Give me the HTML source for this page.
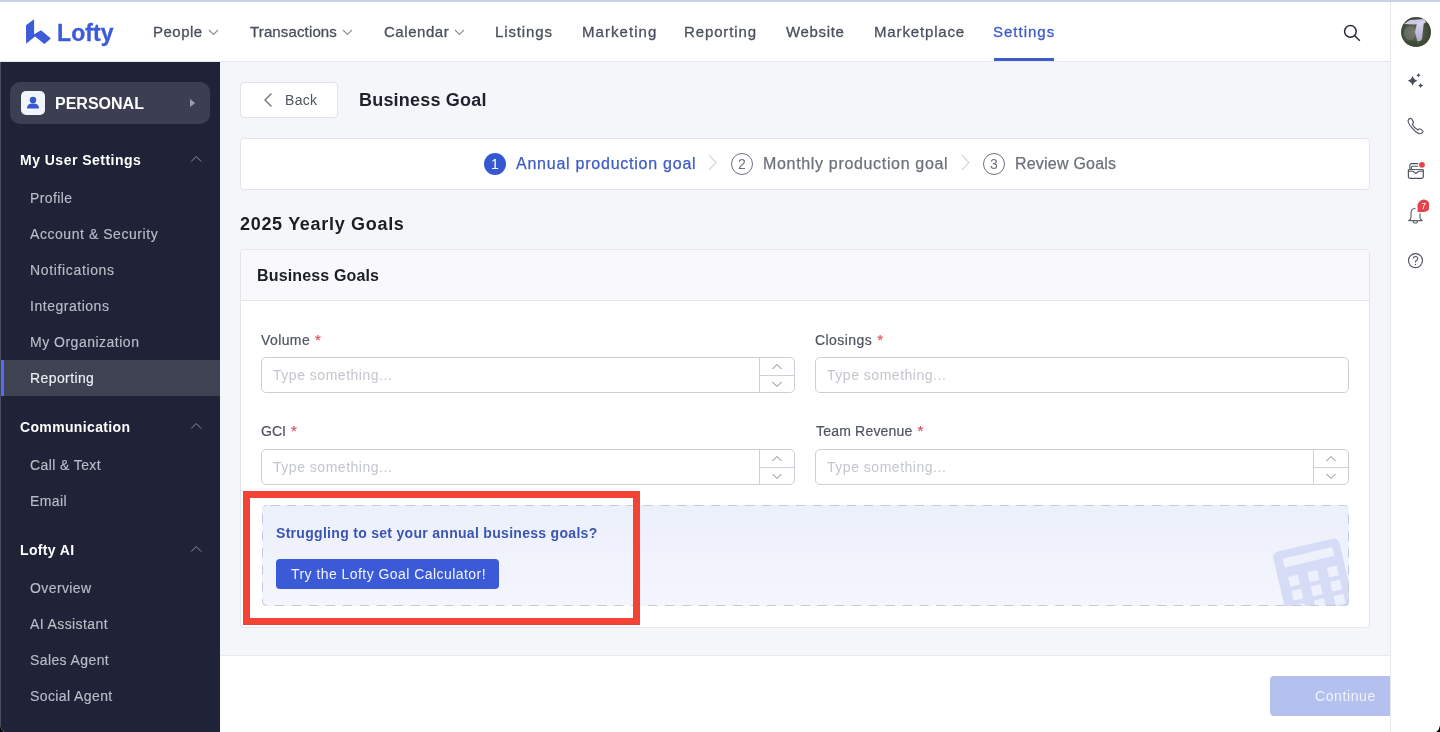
<!DOCTYPE html>
<html><head><meta charset="utf-8">
<style>
*{box-sizing:border-box;margin:0;padding:0}
html,body{width:1440px;height:732px;overflow:hidden;background:#000}
body{font-family:"Liberation Sans",sans-serif;position:relative}
.abs{position:absolute}
#app{position:absolute;left:0;top:0;width:1440px;height:732px;background:#fff;overflow:hidden;will-change:transform;border-radius:0 0 5px 5px / 0 0 9px 9px}
#topline{position:absolute;left:0;top:0;width:1440px;height:2px;background:#c9cfe3}
#nav{position:absolute;left:0;top:2px;width:1390px;height:60px;background:#fff;border-bottom:1px solid #e6e8ee}
.nv{position:absolute;top:21px;font-size:15px;color:#4b505c;white-space:nowrap;line-height:18px;-webkit-text-stroke:0.3px currentColor}
#side{position:absolute;left:0;top:62px;width:220px;height:670px;background:#202337}
#side .edge{position:absolute;left:0;top:0;width:1px;height:670px;background:#4a4d5e}
.sh{position:absolute;left:20px;font-size:14px;font-weight:bold;color:#fff;letter-spacing:0.35px;line-height:16px;white-space:nowrap}
.si{position:absolute;left:30px;font-size:14px;color:#b9bcc7;letter-spacing:0.4px;line-height:16px;white-space:nowrap;-webkit-text-stroke:0.15px currentColor}
.up{position:absolute;left:190px}
#main{position:absolute;left:220px;top:62px;width:1170px;height:594px;background:#f5f6fa;overflow:hidden}
#foot{position:absolute;left:220px;top:655px;width:1170px;height:77px;background:#fff;border-top:1px solid #e8eaf0;overflow:hidden}
#rail{position:absolute;left:1390px;top:2px;width:50px;height:730px;background:#fff;border-left:1px solid #e6e8ee}
.box{position:absolute;background:#fff;border:1px solid #e3e5ea;border-radius:4px}
.lbl{position:absolute;font-size:14px;color:#4f5460;line-height:16px;white-space:nowrap;-webkit-text-stroke:0.2px currentColor}
.lbl b{color:#db5060;font-weight:normal;margin-left:5px;font-size:15px;letter-spacing:0}
.inp{position:absolute;width:534px;height:36px;background:#fff;border:1px solid #cdd0d6;border-radius:5px}
.ph{position:absolute;left:11px;top:9px;font-size:14px;color:#c3c6ce;line-height:16px;letter-spacing:0.52px;white-space:nowrap}
.spin{position:absolute;right:0;top:0;width:35px;height:34px;border-left:1px solid #cdd0d6}
.spin i{position:absolute;left:0;top:17px;width:34px;height:1px;background:#cdd0d6}
</style></head>
<body>
<div id="app">
  <div id="topline"></div>
  <div id="nav">
    <svg class="abs" style="left:26px;top:17px" width="26" height="26" viewBox="26 19 26 26">
      <polygon points="26,25.3 34.1,19.2 34.1,34.2 41,30.2 50.9,38.6 44.4,44 35,36.6 26.1,43.8" fill="#3b5bd9"/>
    </svg>
    <div class="nv" style="left:57px;top:18px;font-size:23px;font-weight:bold;color:#3b5bd9;line-height:26px;letter-spacing:0.1px">Lofty</div>
    <div class="nv" style="left:153px;letter-spacing:0.5px">People</div>
    <svg class="abs" style="left:208px;top:27px" width="11" height="7" viewBox="0 0 11 7"><path d="M1 1 L5.5 5.5 L10 1" fill="none" stroke="#8c909a" stroke-width="1.2"/></svg>
    <div class="nv" style="left:250px;letter-spacing:0.14px">Transactions</div>
    <svg class="abs" style="left:342px;top:27px" width="11" height="7" viewBox="0 0 11 7"><path d="M1 1 L5.5 5.5 L10 1" fill="none" stroke="#8c909a" stroke-width="1.2"/></svg>
    <div class="nv" style="left:384px;letter-spacing:0.54px">Calendar</div>
    <svg class="abs" style="left:454px;top:27px" width="11" height="7" viewBox="0 0 11 7"><path d="M1 1 L5.5 5.5 L10 1" fill="none" stroke="#8c909a" stroke-width="1.2"/></svg>
    <div class="nv" style="left:495px;letter-spacing:0.86px">Listings</div>
    <div class="nv" style="left:582px;letter-spacing:1.06px">Marketing</div>
    <div class="nv" style="left:684px;letter-spacing:0.87px">Reporting</div>
    <div class="nv" style="left:786px;letter-spacing:0.67px">Website</div>
    <div class="nv" style="left:874px;letter-spacing:0.85px">Marketplace</div>
    <div class="nv" style="left:993px;color:#3d5bc9;letter-spacing:1px">Settings</div>
    <div class="abs" style="left:994px;top:56px;width:60px;height:3px;background:#3d5bc9"></div>
    <svg class="abs" style="left:1340px;top:21px" width="24" height="24" viewBox="1340 23 24 24">
      <circle cx="1350.4" cy="31.4" r="5.8" fill="none" stroke="#262a33" stroke-width="1.5"/>
      <line x1="1354.7" y1="35.7" x2="1359.8" y2="40.8" stroke="#262a33" stroke-width="1.5"/>
    </svg>
  </div>

  <div id="side">
    <div class="edge"></div>
    <div class="abs" style="left:10px;top:20px;width:200px;height:42px;background:#3c3f51;border-radius:10px"></div>
    <div class="abs" style="left:21px;top:29px;width:24px;height:24px;background:#f2f4fd;border-radius:5px"></div>
    <svg class="abs" style="left:21px;top:29px" width="24" height="24" viewBox="0 0 24 24">
      <circle cx="12" cy="9" r="3.2" fill="#3557cf"/>
      <path d="M6 17.5 C6 13.8 8.7 12.6 12 12.6 C15.3 12.6 18 13.8 18 17.5 Z" fill="#3557cf"/>
    </svg>
    <div class="abs" style="left:55px;top:33px;font-size:16px;font-weight:bold;color:#fff;line-height:18px">PERSONAL</div>
    <svg class="abs" style="left:189px;top:36px" width="8" height="12" viewBox="0 0 8 12"><path d="M1 1 L6.2 5 L1 9 Z" fill="#9a9dab"/></svg>

    <div class="sh" style="top:90px;letter-spacing:0.48px">My User Settings</div>
    <svg class="up" style="top:93px" width="13" height="8" viewBox="0 0 13 8"><path d="M1.2 6.5 L6.2 1.5 L11.2 6.5" fill="none" stroke="#8d90a0" stroke-width="1"/></svg>
    <div class="si" style="top:128px">Profile</div>
    <div class="si" style="top:164px;letter-spacing:0.55px">Account &amp; Security</div>
    <div class="si" style="top:200px;letter-spacing:0.65px">Notifications</div>
    <div class="si" style="top:236px;letter-spacing:0.52px">Integrations</div>
    <div class="si" style="top:272px;letter-spacing:0.5px">My Organization</div>
    <div class="abs" style="left:0;top:298px;width:220px;height:36px;background:#3f4253"></div>
    <div class="abs" style="left:1px;top:298px;width:3px;height:36px;background:#4f6ef0"></div>
    <div class="si" style="top:308px;color:#eceef3">Reporting</div>

    <div class="sh" style="top:357px">Communication</div>
    <svg class="up" style="top:360px" width="13" height="8" viewBox="0 0 13 8"><path d="M1.2 6.5 L6.2 1.5 L11.2 6.5" fill="none" stroke="#8d90a0" stroke-width="1"/></svg>
    <div class="si" style="top:395px">Call &amp; Text</div>
    <div class="si" style="top:431px">Email</div>

    <div class="sh" style="top:480px">Lofty AI</div>
    <svg class="up" style="top:483px" width="13" height="8" viewBox="0 0 13 8"><path d="M1.2 6.5 L6.2 1.5 L11.2 6.5" fill="none" stroke="#8d90a0" stroke-width="1"/></svg>
    <div class="si" style="top:518px">Overview</div>
    <div class="si" style="top:554px">AI Assistant</div>
    <div class="si" style="top:590px">Sales Agent</div>
    <div class="si" style="top:626px">Social Agent</div>
  </div>

  <div id="main">
    <!-- Back button -->
    <div class="box" style="left:20px;top:20px;width:98px;height:36px;border-color:#e0e2e8"></div>
    <svg class="abs" style="left:42px;top:30px" width="12" height="16" viewBox="0 0 12 16"><path d="M9.5 1.5 L3 8 L9.5 14.5" fill="none" stroke="#6a6e78" stroke-width="1.3"/></svg>
    <div class="abs" style="left:65px;top:30px;font-size:14px;color:#50545f;line-height:16px;letter-spacing:0.3px">Back</div>
    <div class="abs" style="left:139px;top:28px;font-size:18px;font-weight:bold;color:#1f222d;line-height:20px;letter-spacing:0.2px">Business Goal</div>

    <!-- Stepper -->
    <div class="box" style="left:20px;top:76px;width:1130px;height:52px"></div>
    <div class="abs" style="left:264px;top:91px;width:22px;height:22px;border-radius:50%;background:#3557cf;color:#fff;font-size:14px;line-height:22px;text-align:center">1</div>
    <div class="abs" style="left:296px;top:93px;font-size:16px;color:#3d5bc4;line-height:18px;letter-spacing:0.76px;white-space:nowrap;-webkit-text-stroke:0.25px currentColor">Annual production goal</div>
    <svg class="abs" style="left:488px;top:92px" width="10" height="17" viewBox="0 0 10 17"><path d="M1 1 L8 8.5 L1 16" fill="none" stroke="#d5d7dd" stroke-width="1.2"/></svg>
    <div class="abs" style="left:511px;top:91px;width:22px;height:22px;border-radius:50%;border:1px solid #6d717b;color:#6d717b;font-size:14px;line-height:20px;text-align:center">2</div>
    <div class="abs" style="left:543px;top:93px;font-size:16px;color:#6d717b;line-height:18px;letter-spacing:0.67px;white-space:nowrap;-webkit-text-stroke:0.25px currentColor">Monthly production goal</div>
    <svg class="abs" style="left:741px;top:92px" width="10" height="17" viewBox="0 0 10 17"><path d="M1 1 L8 8.5 L1 16" fill="none" stroke="#d5d7dd" stroke-width="1.2"/></svg>
    <div class="abs" style="left:763px;top:91px;width:22px;height:22px;border-radius:50%;border:1px solid #6d717b;color:#6d717b;font-size:14px;line-height:20px;text-align:center">3</div>
    <div class="abs" style="left:795px;top:93px;font-size:16px;color:#6d717b;line-height:18px;letter-spacing:0.21px;white-space:nowrap;-webkit-text-stroke:0.25px currentColor">Review Goals</div>

    <div class="abs" style="left:20px;top:152px;font-size:18px;font-weight:bold;color:#1c1e26;line-height:20px;letter-spacing:0.69px;white-space:nowrap">2025 Yearly Goals</div>

    <!-- Card -->
    <div class="box" style="left:20px;top:187px;width:1130px;height:379px;overflow:hidden">
      <div class="abs" style="left:0;top:0;width:1128px;height:51px;background:#f9f9fc;border-bottom:1px solid #e3e5ea"></div>
      <div class="abs" style="left:16px;top:17px;font-size:16px;font-weight:bold;color:#1c1e26;line-height:18px;letter-spacing:0.15px;white-space:nowrap">Business Goals</div>

      <div class="lbl" style="left:20px;top:82px;letter-spacing:0.4px">Volume<b>*</b></div>
      <div class="inp" style="left:20px;top:107px"><div class="ph">Type something...</div><div class="spin"><i></i>
        <svg class="abs" style="left:11px;top:5px" width="12" height="7" viewBox="0 0 12 7"><path d="M1.5 6 L6 1.5 L10.5 6" fill="none" stroke="#7d818b" stroke-width="1"/></svg>
        <svg class="abs" style="left:11px;top:23px" width="12" height="7" viewBox="0 0 12 7"><path d="M1.5 1 L6 5.5 L10.5 1" fill="none" stroke="#7d818b" stroke-width="1"/></svg>
      </div></div>
      <div class="lbl" style="left:574px;top:82px;letter-spacing:0.43px">Closings<b>*</b></div>
      <div class="inp" style="left:574px;top:107px"><div class="ph">Type something...</div></div>

      <div class="lbl" style="left:20px;top:173px">GCI<b>*</b></div>
      <div class="inp" style="left:20px;top:199px"><div class="ph">Type something...</div><div class="spin"><i></i>
        <svg class="abs" style="left:11px;top:5px" width="12" height="7" viewBox="0 0 12 7"><path d="M1.5 6 L6 1.5 L10.5 6" fill="none" stroke="#7d818b" stroke-width="1"/></svg>
        <svg class="abs" style="left:11px;top:23px" width="12" height="7" viewBox="0 0 12 7"><path d="M1.5 1 L6 5.5 L10.5 1" fill="none" stroke="#7d818b" stroke-width="1"/></svg>
      </div></div>
      <div class="lbl" style="left:575px;top:173px;letter-spacing:0.2px">Team Revenue<b>*</b></div>
      <div class="inp" style="left:574px;top:199px"><div class="ph">Type something...</div><div class="spin"><i></i>
        <svg class="abs" style="left:11px;top:5px" width="12" height="7" viewBox="0 0 12 7"><path d="M1.5 6 L6 1.5 L10.5 6" fill="none" stroke="#7d818b" stroke-width="1"/></svg>
        <svg class="abs" style="left:11px;top:23px" width="12" height="7" viewBox="0 0 12 7"><path d="M1.5 1 L6 5.5 L10.5 1" fill="none" stroke="#7d818b" stroke-width="1"/></svg>
      </div></div>

      <!-- promo -->
      <div class="abs" style="left:21px;top:255px;width:1087px;height:101px;border-radius:4px;overflow:hidden;background:linear-gradient(#ecf0fb,#f4f5fd)">
        <svg class="abs" style="left:1000px;top:20px" width="90" height="90" viewBox="0 0 90 90">
          <g transform="translate(10 28) rotate(-13.3)">
            <rect x="0" y="0" width="68" height="95" rx="6" fill="#d6dcf6"/>
            <g fill="#eef1fc">
            <rect x="9" y="8" width="51" height="9"/>
            <rect x="10" y="27" width="10" height="10"/><rect x="30" y="27" width="10" height="10"/><rect x="50" y="27" width="10" height="10"/>
            <rect x="10" y="41.5" width="10" height="10"/><rect x="30" y="41.5" width="10" height="10"/><rect x="50" y="41.5" width="10" height="10"/>
            <rect x="10" y="56" width="10" height="10"/><rect x="30" y="56" width="10" height="10"/><rect x="50" y="56" width="10" height="10"/>
            <rect x="10" y="70.5" width="10" height="10"/><rect x="30" y="70.5" width="10" height="10"/><rect x="50" y="70.5" width="10" height="10"/>
            </g>
          </g>
        </svg>
        <svg class="abs" style="left:0;top:0" width="1087" height="101">
          <rect x="0.5" y="0.5" width="1086" height="100" rx="4" fill="none" stroke="#c6c9db" stroke-width="1" stroke-dasharray="9.2 7.76" stroke-dashoffset="13.16"/>
        </svg>
        <div class="abs" style="left:14px;top:20px;font-size:14px;font-weight:bold;color:#3b55b5;line-height:16px;letter-spacing:0.3px;white-space:nowrap">Struggling to set your annual business goals?</div>
        <div class="abs" style="left:14px;top:54px;width:223px;height:30px;background:#3a5ad8;border-radius:4px"></div>
        <div class="abs" style="left:29px;top:61px;font-size:14px;color:#f2f4fd;line-height:16px;letter-spacing:0.45px;white-space:nowrap">Try the Lofty Goal Calculator!</div>
      </div>
    </div>
    <!-- red annotation -->
    <div class="abs" style="left:23px;top:429px;width:397px;height:134px;border:7px solid #f44234"></div>
  </div>

  <div id="foot">
    <div class="abs" style="left:1050px;top:20px;width:130px;height:40px;background:#b4c1ef;border-radius:4px"></div>
    <div class="abs" style="left:1095px;top:32px;font-size:14px;color:#f0f3fd;line-height:16px;letter-spacing:0.6px">Continue</div>
  </div>

  <div id="rail">
    <svg class="abs" style="left:10px;top:15px" width="30" height="30" viewBox="0 0 30 30">
      <defs><clipPath id="av"><circle cx="15" cy="15" r="15"/></clipPath>
      <linearGradient id="wf" x1="0" y1="0" x2="0" y2="1"><stop offset="0" stop-color="#dcd8f0"/><stop offset="1" stop-color="#a9a3c9"/></linearGradient>
      <radialGradient id="avb" cx="0.45" cy="0.5" r="0.6"><stop offset="0" stop-color="#6a705f"/><stop offset="1" stop-color="#323c2e"/></radialGradient></defs>
      <g clip-path="url(#av)">
        <rect width="30" height="30" fill="url(#avb)"/>
        <ellipse cx="9" cy="16" rx="6" ry="7" fill="#7c8074" opacity="0.55"/>
        <polygon points="3,7 9,3 24,2 25,6 13,7.5" fill="#cdc9e4"/>
        <polygon points="16,6 23,4 21,22 17,27 14,15" fill="url(#wf)"/>
        <rect x="0" y="24" width="30" height="6" fill="#3f4c33" opacity="0.8"/>
      </g>
    </svg>
    <svg class="abs" style="left:14px;top:69px" width="20" height="20" viewBox="1405 71 20 20"><path d="M1412.6 75.70 Q1413.60 79.70 1417.60 80.7 Q1413.60 81.70 1412.6 85.70 Q1411.60 81.70 1407.60 80.7 Q1411.60 79.70 1412.6 75.70Z" fill="#474c59"/><path d="M1418.5 73.10 Q1418.94 74.86 1420.70 75.3 Q1418.94 75.74 1418.5 77.50 Q1418.06 75.74 1416.30 75.3 Q1418.06 74.86 1418.5 73.10Z" fill="#474c59"/><path d="M1420.6 82.90 Q1421.12 84.98 1423.20 85.5 Q1421.12 86.02 1420.6 88.10 Q1420.08 86.02 1418.00 85.5 Q1420.08 84.98 1420.6 82.90Z" fill="#474c59"/></svg>
    <svg class="abs" style="left:14px;top:114px" width="20" height="22" viewBox="1405 116 20 22">
      <path d="M1410.2 118.4 C1409 118.8 1408.2 119.6 1408.1 120.6 C1408 122.2 1409.3 124.6 1411.6 127.4 C1414.3 130.6 1417.3 133.4 1419.6 133.7 C1420.8 133.9 1422.1 133.2 1422.9 132 C1423.2 131.5 1423 131 1422.5 130.6 L1420.2 128.9 C1419.7 128.6 1419.2 128.7 1418.8 129.1 L1418 130 C1416.3 129.2 1413.3 126.1 1412.3 124.2 L1413.1 123.4 C1413.5 123 1413.6 122.4 1413.3 121.9 L1411.5 118.8 C1411.2 118.3 1410.7 118.2 1410.2 118.4 Z" fill="none" stroke="#50545f" stroke-width="1.15" stroke-linejoin="round"/>
    </svg>
    <svg class="abs" style="left:14px;top:159px" width="22" height="22" viewBox="1405 161 22 22">
      <path d="M1408.4 169.6 L1408.4 176.8 Q1408.4 178.3 1409.9 178.3 L1421.8 178.3 Q1423.3 178.3 1423.3 176.8 L1423.3 169.6" fill="none" stroke="#50545f" stroke-width="1.2"/>
      <path d="M1408.4 171.3 L1413.1 171.3 L1415.8 173.5 L1418.5 171.3 L1423.3 171.3" fill="none" stroke="#50545f" stroke-width="1.1"/>
      <path d="M1408.4 169.6 L1423.3 169.6" fill="none" stroke="#50545f" stroke-width="1"/>
      <path d="M1409.9 169.6 L1409.9 165.2 Q1409.9 163.6 1411.5 163.6 L1418.2 163.6" fill="none" stroke="#50545f" stroke-width="1.1"/>
      <path d="M1411.4 169 L1411.4 167.4 Q1411.4 166.3 1412.5 166.3 L1418.2 166.3" fill="none" stroke="#50545f" stroke-width="1.1"/>
      <circle cx="1421.95" cy="164.8" r="2.9" fill="#e5434b"/>
    </svg>
    <svg class="abs" style="left:14px;top:196px" width="24" height="30" viewBox="1405 198 24 30">
      <path d="M1415.6 208.3 Q1411 208.6 1411 213.2 L1411 217.5 Q1411 219.6 1408.7 220.6 L1422.3 220.6 Q1420 219.6 1420 217.5 L1420 213.2" fill="none" stroke="#5f636d" stroke-width="1.15" stroke-linejoin="round"/>
      <path d="M1413.2 220.9 A2.1 2.1 0 0 0 1417.4 220.9" fill="none" stroke="#5f636d" stroke-width="1.15"/>
      <circle cx="1423.8" cy="205.8" r="6.2" fill="#e5434b"/><rect x="1417.6" y="205.8" width="6.2" height="6.2" fill="#e5434b"/>
      <text x="1423.6" y="208.8" font-family="Liberation Sans" font-size="8.5" fill="#fff" text-anchor="middle">7</text>
    </svg>
    <svg class="abs" style="left:14px;top:250px" width="20" height="22" viewBox="1405 252 20 22">
      <circle cx="1415.5" cy="260.6" r="7" fill="none" stroke="#50545f" stroke-width="1.15"/>
      <path d="M1413.3 258.6 Q1413.3 256.5 1415.5 256.5 Q1417.7 256.5 1417.7 258.5 Q1417.7 259.8 1416.3 260.6 Q1415.4 261.2 1415.4 262.6" fill="none" stroke="#50545f" stroke-width="1.15"/>
      <circle cx="1415.4" cy="264.6" r="0.75" fill="#50545f"/>
    </svg>
  </div>
</div>
</body></html>
